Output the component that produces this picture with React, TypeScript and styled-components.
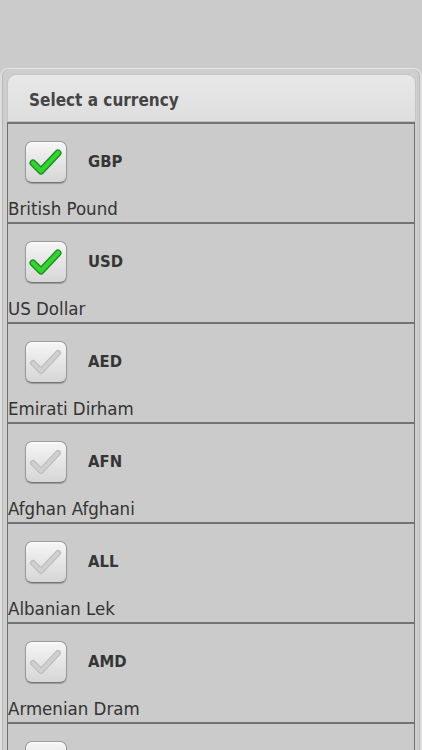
import { createGlobalStyle } from "styled-components";
import styled from "styled-components";

const GlobalStyle = createGlobalStyle`
  html, body {
    margin: 0;
    padding: 0;
    background: #cbcbcb;
    font-family: "DejaVu Sans", Verdana, sans-serif;
    font-stretch: condensed;
    overflow: hidden;
  }
`;

const Screen = styled.div`
  width: 422px;
  height: 750px;
  background: #cbcbcb;
  display: flex;
  flex-direction: column;
  overflow: hidden;
`;

const TopSpace = styled.div`
  height: 68px;
  flex-shrink: 0;
`;

const Panel = styled.div`
  flex: 1;
  display: flex;
  flex-direction: column;
  padding: 5px 5px 0 6px;
  border-radius: 8px 8px 0 0;
  background: #cecece;
  border-left: 2px solid #dedede;
  border-right: 2px solid #dedede;
  border-top: 1px solid #e4e4e4;
  box-shadow: inset 1px 0 0 #b8b8b8, inset -1px 0 0 #b8b8b8;
  box-sizing: border-box;
`;

const Header = styled.div`
  height: 48px;
  box-sizing: border-box;
  border: 1px solid #c4c4c4;
  border-radius: 9px 9px 0 0;
  background: linear-gradient(#e8e8e8, #dedede);
  display: flex;
  align-items: center;
  padding-left: 21px;
  padding-top: 4px;
  margin: 0 -1px;
`;

const HeaderTitle = styled.span`
  font-size: 17px;
  font-weight: 600;
  color: #454545;
`;

const List = styled.div`
  border-left: 1.5px solid #707070;
  border-right: 1.5px solid #707070;
  display: flex;
  flex-direction: column;
  margin-left: -1px;
`;

const Row = styled.div`
  height: 100px;
  box-sizing: border-box;
  border-top: 2px solid #737373;
  display: flex;
  flex-direction: column;
  background: #cbcbcb;
`;

const RowTop = styled.div`
  display: flex;
  align-items: center;
  padding: 17px 0 0 17px;
  gap: 21px;
`;

const Code = styled.span`
  font-size: 16.5px;
  font-weight: 600;
  color: #353535;
  margin-bottom: 2px;
`;

const Name = styled.span`
  font-size: 18.5px;
  color: #333;
  margin-top: 15px;
`;

const Box = styled.div`
  width: 42px;
  height: 42px;
  box-sizing: border-box;
  border-radius: 7px;
  border: 1px solid #9a9a9a;
  border-bottom-color: #777;
  background: linear-gradient(#f6f6f6, #e2e2e2 60%, #d6d6d6);
  box-shadow: 0 1px 1px rgba(0, 0, 0, 0.25), inset 0 1px 0 #fff;
  display: flex;
  align-items: center;
  justify-content: center;
`;

function Check({ on }: { on: boolean }) {
  const d = "M4 16 L12 24 L29 6";
  return (
    <Box>
      <svg width="34" height="30" viewBox="0 0 34 30">
        <path
          d={d}
          fill="none"
          stroke={on ? "#1c8a1c" : "#bdbdbd"}
          strokeWidth={on ? 7 : 6}
          strokeLinecap="round"
          strokeLinejoin="round"
        />
        <path
          d={d}
          fill="none"
          stroke={on ? "#2fd62f" : "#d0d0d0"}
          strokeWidth={on ? 4.5 : 3.5}
          strokeLinecap="round"
          strokeLinejoin="round"
        />
      </svg>
    </Box>
  );
}

const currencies = [
  { code: "GBP", name: "British Pound", on: true },
  { code: "USD", name: "US Dollar", on: true },
  { code: "AED", name: "Emirati Dirham", on: false },
  { code: "AFN", name: "Afghan Afghani", on: false },
  { code: "ALL", name: "Albanian Lek", on: false },
  { code: "AMD", name: "Armenian Dram", on: false },
  { code: "ANG", name: "Dutch Guilder", on: false },
];

export default function App() {
  return (
    <Screen>
      <GlobalStyle />
      <TopSpace />
      <Panel>
        <Header>
          <HeaderTitle>Select a currency</HeaderTitle>
        </Header>
        <List>
          {currencies.map((c) => (
            <Row key={c.code}>
              <RowTop>
                <Check on={c.on} />
                <Code>{c.code}</Code>
              </RowTop>
              <Name>{c.name}</Name>
            </Row>
          ))}
        </List>
      </Panel>
    </Screen>
  );
}
